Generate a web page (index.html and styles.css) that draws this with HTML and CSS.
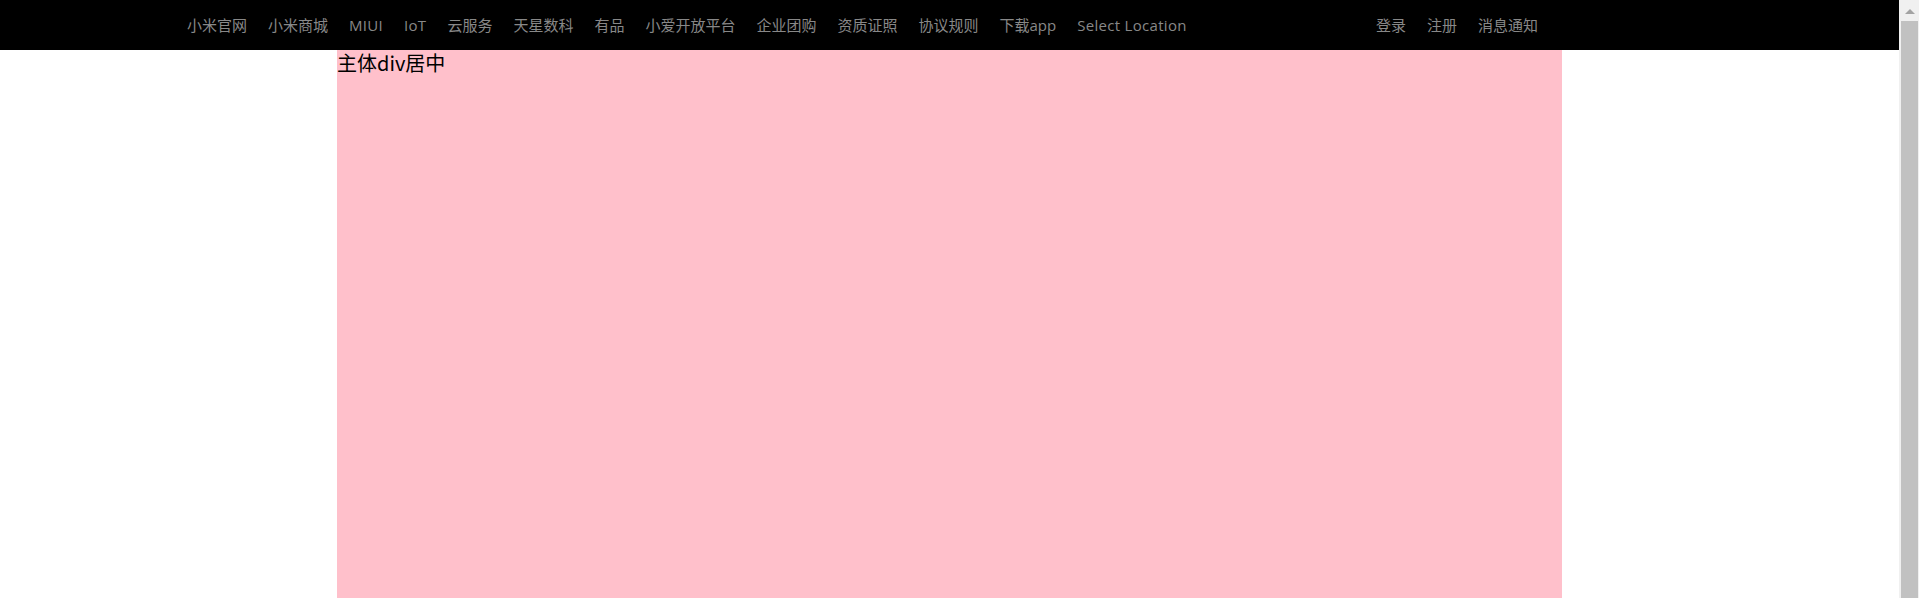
FILE: index.html
```html
<!DOCTYPE html>
<html lang="zh-CN">
<head>
<meta charset="utf-8">
<title>小米</title>
<link rel="stylesheet" href="styles.css">
</head>
<body>
<div class="page">
  <div class="content">
    <div class="topbar">
      <div class="topbar-inner">
        <ul class="nav nav-left">
          <li><a href="#">小米官网</a></li>
          <li><a href="#">小米商城</a></li>
          <li><a class="latin" href="#">MIUI</a></li>
          <li><a class="latin" href="#">IoT</a></li>
          <li><a href="#">云服务</a></li>
          <li><a href="#">天星数科</a></li>
          <li><a href="#">有品</a></li>
          <li><a href="#">小爱开放平台</a></li>
          <li><a href="#">企业团购</a></li>
          <li><a href="#">资质证照</a></li>
          <li><a href="#">协议规则</a></li>
          <li><a href="#">下载app</a></li>
          <li><a class="latin" href="#">Select Location</a></li>
        </ul>
        <ul class="nav nav-right">
          <li><a href="#">登录</a></li>
          <li><a href="#">注册</a></li>
          <li><a href="#">消息通知</a></li>
        </ul>
      </div>
    </div>
    <div class="main">主体div居中</div>
  </div>
  <div class="scrollbar">
    <div class="scroll-btn"><span class="arrow-up"></span></div>
    <div class="scroll-thumb"></div>
  </div>
</div>
</body>
</html>
```

FILE: styles.css
```css
* {
  box-sizing: border-box;
}

html,
body {
  margin: 0;
  height: 100%;
  overflow: hidden;
}

body {
  font-family: "Open Sans", "Noto Sans CJK SC", sans-serif;
  color: #000;
  background: #fff;
}

.page {
  display: flex;
  height: 100vh;
}

.content {
  flex: 1;
  min-width: 0;
  overflow: hidden;
}

.topbar {
  height: 50px;
  background: #000;
}

.topbar-inner {
  width: 1351px;
  margin-left: 187px;
  height: 50px;
  display: flex;
  justify-content: space-between;
  align-items: center;
}

.nav {
  list-style: none;
  margin: 0;
  padding: 0;
  display: flex;
  gap: 21px;
}

.nav a {
  display: block;
  line-height: 50px;
  font-size: 15px;
  color: #888;
  text-decoration: none;
}

.nav a.latin {
  letter-spacing: 0.3px;
}

.main {
  width: 1225px;
  height: 600px;
  margin: 0 auto;
  background: pink;
  font-family: "Noto Sans CJK SC", sans-serif;
  font-size: 20px;
  line-height: 26px;
}

/* visual scrollbar strip at the right edge */
.scrollbar {
  width: 20px;
  flex: none;
  background: #f0f0f0;
  display: flex;
  flex-direction: column;
  padding: 0 1px 0 2px;
}

.scroll-btn {
  height: 21px;
  display: flex;
  justify-content: center;
  padding-top: 9px;
}

.arrow-up {
  width: 0;
  height: 0;
  border-left: 5px solid transparent;
  border-right: 5px solid transparent;
  border-bottom: 5px solid #a3a3a3;
}

.scroll-thumb {
  flex: 1;
  background: #c1c1c1;
}
```
